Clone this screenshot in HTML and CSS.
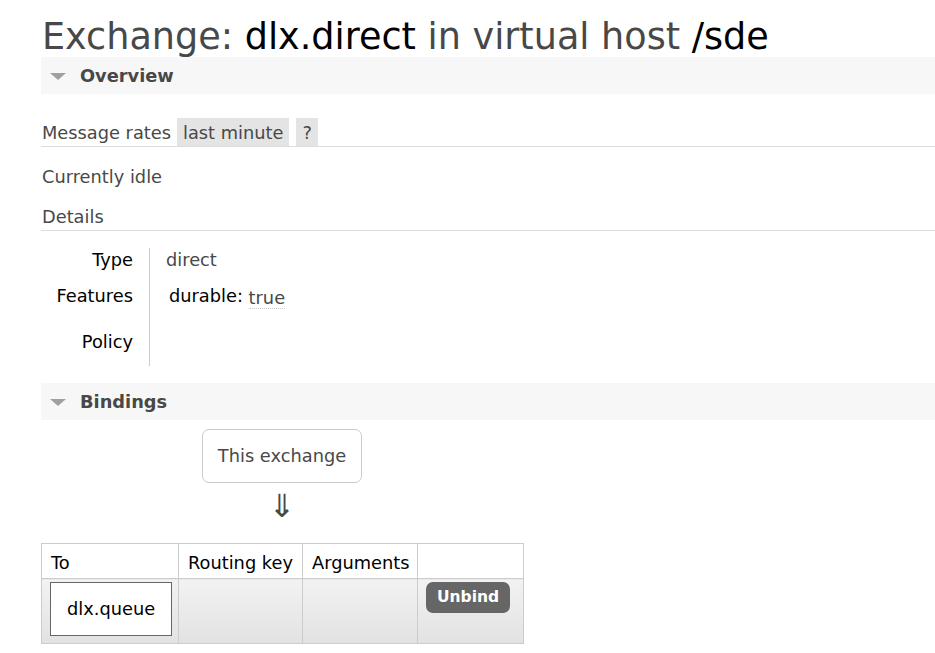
FILE: index.html
```html
<!DOCTYPE html>
<html lang="en">
<head>
  <meta charset="UTF-8">
  <meta name="viewport" content="width=device-width, initial-scale=1.0">
  <title>Exchange: dlx.direct</title>
  <link rel="stylesheet" href="styles.css">
</head>
<body>
  <div class="main">
    <h1>Exchange: <b>dlx.direct</b> in virtual host <b>/sde</b></h1>

    <div class="section">
      <h2><span class="tri"></span>Overview</h2>
      <div class="rates">
        <span class="rates-label">Message rates</span>
        <span class="pill">last minute</span>
        <span class="pill">?</span>
      </div>
      <p class="idle">Currently idle</p>
      <h3>Details</h3>
      <table class="facts">
        <tr>
          <th>Type</th>
          <td>direct</td>
        </tr>
        <tr>
          <th>Features</th>
          <td class="features">
            <span class="feature-key">durable:</span> <abbr>true</abbr>
          </td>
        </tr>
        <tr>
          <th>Policy</th>
          <td></td>
        </tr>
      </table>
    </div>

    <div class="section">
      <h2><span class="tri"></span>Bindings</h2>
      <div class="bindings">
        <div class="this-node"><span class="node">This exchange</span></div>
        <div class="arrow">&#8659;</div>
        <table class="list">
          <colgroup>
            <col class="c1"><col class="c2"><col class="c3"><col class="c4">
          </colgroup>
          <thead>
            <tr>
              <th>To</th>
              <th>Routing key</th>
              <th>Arguments</th>
              <th></th>
            </tr>
          </thead>
          <tbody>
            <tr>
              <td><span class="node queue">dlx.queue</span></td>
              <td></td>
              <td></td>
              <td><button class="unbind">Unbind</button></td>
            </tr>
          </tbody>
        </table>
      </div>
    </div>
  </div>
</body>
</html>
```

FILE: styles.css
```css
body {
  margin: 0;
  font-family: "DejaVu Sans", Verdana, sans-serif;
  font-size: 17.8px;
  line-height: 20px;
  color: #484848;
  background: #fff;
  overflow-x: hidden;
}
.main { padding: 16px 0 0 41px; }

h1 {
  margin: 0 0 0 1px;
  font-size: 36.6px; line-height: 41px;
  font-weight: normal;
  color: #484848;
  white-space: nowrap;
}
h1 b { font-weight: normal; color: #000; }

h2 {
  margin: 0;
  padding: 1px 0 1px 9px;
  line-height: 35px;
  font-size: 17.8px;
  font-weight: bold;
  color: #484848;
  background: #f7f7f7;
  display: flex; align-items: center;
}
.tri {
  width: 0; height: 0;
  border-left: 8px solid transparent;
  border-right: 8px solid transparent;
  border-top: 7px solid #a0a0a0;
  margin: 1px 14px 0 0;
}

.rates {
  margin-top: 24px;
  display: flex; align-items: flex-end; gap: 7px;
  border-bottom: 1px solid #ddd;
}
.rates-label { padding: 0 0 3px 1px; margin-right: -1px; }
.pill {
  background: #e4e4e4;
  padding: 5px 6px 3px;
}

.idle { margin: 20px 0 0 1px; }
h3 {
  margin: 20px 0 0;
  padding: 0 0 3px 1px;
  font-size: 17.8px; font-weight: normal;
  border-bottom: 1px solid #ddd;
}

.facts { margin-top: 17px; border-collapse: collapse; }
.facts th {
  width: 92px;
  padding: 2px 16px 14px 0;
  text-align: right; font-weight: normal; color: #000;
  border-right: 1px solid #ccc;
  vertical-align: top;
}
.facts td { padding: 2px 16px 14px; vertical-align: top; }
.facts td.features { padding-bottom: 24px; }
.feature-key { color: #000; margin-left: 3px; }
.facts abbr {
  text-decoration: none;
  border-bottom: 1px dotted #ccc;
  position: relative; top: 2px;
}

.section + .section { margin-top: 17px; }

.bindings { width: 482px; text-align: center; }
.this-node { margin-top: 9px; }
.node {
  display: inline-block;
  border: 1px solid #ccc; border-radius: 7px;
  padding: 16px 15px;
}
.arrow {
  font-size: 32px; line-height: 30px;
  margin-top: 8px; height: 52px;
}

.list {
  width: 482px;
  table-layout: fixed;
  border-collapse: collapse;
  text-align: left;
}
.list .c1 { width: 137px; }
.list .c2 { width: 124px; }
.list .c3 { width: 115px; }
.list .c4 { width: 106px; }
.list th {
  padding: 9px 9px 5px;
  font-weight: normal; color: #000;
  border: 1px solid #ccc;
  white-space: nowrap;
}
.list td {
  padding: 3px 8px 7px;
  border: 1px solid #ccc;
  vertical-align: top;
  background: linear-gradient(#f2f2f2, #e2e2e2);
}
.node.queue {
  border: 1px solid #666; border-radius: 0;
  background: #fff; color: #000;
  padding: 16px 16px;
}
.unbind {
  font-family: inherit;
  font-size: 15.5px; line-height: 19px; font-weight: bold;
  color: #fff; background: #666;
  border: none; border-radius: 7px;
  padding: 6px 11px;
}
```
